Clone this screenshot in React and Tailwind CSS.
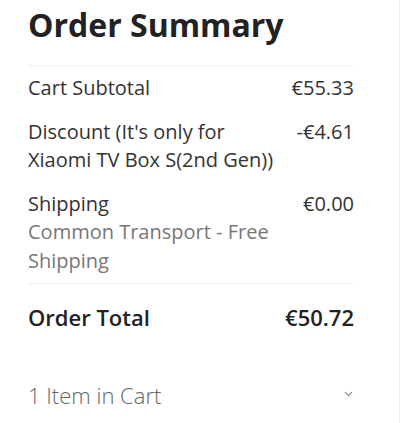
import React from "react";

export default function App() {
  return (
    <main className="w-[400px] min-h-[423px] border-r border-[#efefef] bg-white font-['Open_Sans',sans-serif] text-[#333]">
      <section className="pl-7 pr-[45px] pt-[6px]">
        <h2 className="text-[32px] leading-[38px] font-bold text-[#222] pb-[21px]">
          Order Summary
        </h2>

        <div className="border-t border-[#eee] pt-[8px] pb-[8px] text-[20px] leading-[1.42857]">
          <div className="flex justify-between">
            <span className="w-[250px]">Cart Subtotal</span>
            <span>€55.33</span>
          </div>
          <div className="flex justify-between mt-[15px]">
            <span className="w-[250px]">Discount (It's only for Xiaomi TV Box S(2nd Gen))</span>
            <span>-€4.61</span>
          </div>
          <div className="flex justify-between mt-[15px]">
            <div className="w-[250px]">
              <div>Shipping</div>
              <div className="text-[#777]">Common Transport - Free Shipping</div>
            </div>
            <span>€0.00</span>
          </div>
        </div>

        <div className="border-t border-[#eee] pt-[18px] flex justify-between text-[22px] leading-[30px] font-semibold text-[#222]">
          <span>Order Total</span>
          <span>€50.72</span>
        </div>

        <button className="mt-[47px] w-full flex items-center justify-between text-[22px] leading-[32px] font-light text-[#666]">
          <span>1 Item in Cart</span>
          <svg width="9" height="6" viewBox="0 0 9 6" className="mr-[1px] mt-[-2px]">
            <path d="M1 1.2l3.5 3.5 3.5-3.5" fill="none" stroke="#888" strokeWidth="1.2" />
          </svg>
        </button>
      </section>
    </main>
  );
}
